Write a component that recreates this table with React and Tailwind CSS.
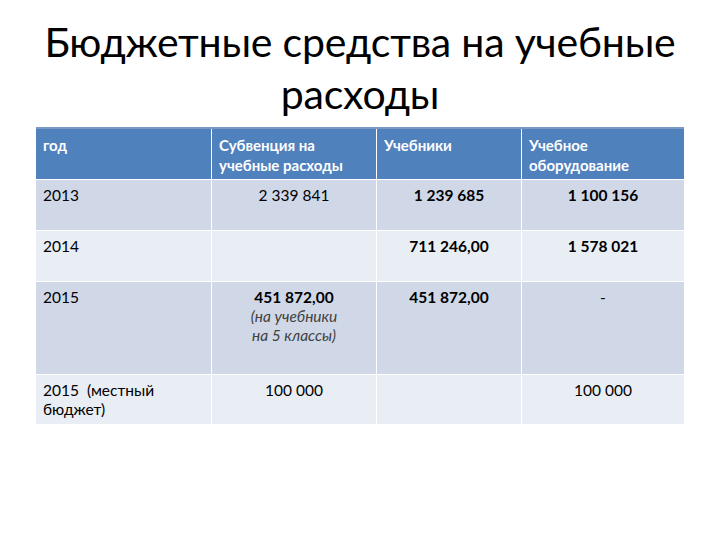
import React from "react";

const rows = [
  {
    bg: "bg-[#d0d8e8]",
    h: "h-[50px]",
    cells: [
      { text: "2013" },
      { text: "2 339 841", center: true },
      { text: "1 239 685", center: true, bold: true },
      { text: "1 100 156", center: true, bold: true },
    ],
  },
  {
    bg: "bg-[#e9edf4]",
    h: "h-[50px]",
    cells: [
      { text: "2014" },
      { text: "" },
      { text: "711 246,00", center: true, bold: true },
      { text: "1 578 021", center: true, bold: true },
    ],
  },
  {
    bg: "bg-[#d0d8e8]",
    h: "h-[92px]",
    cells: [
      { text: "2015" },
      { text: "451 872,00", center: true, bold: true, note: ["(на учебники", "на 5 классы)"] },
      { text: "451 872,00", center: true, bold: true },
      { text: "-", center: true },
    ],
  },
  {
    bg: "bg-[#e9edf4]",
    h: "h-[49px]",
    cells: [
      { lines: ["2015\u00a0\u00a0(местный", "бюджет)"] },
      { text: "100 000", center: true },
      { text: "" },
      { text: "100 000", center: true },
    ],
  },
];

const headers = [["год"], ["Субвенция на", "учебные расходы"], ["Учебники"], ["Учебное", "оборудование"]];

export default function App() {
  return (
    <div className="w-[720px] h-[540px] bg-white text-black" style={{ fontFamily: "Lato, 'Open Sans', sans-serif" }}>
      {/* Title */}
      <div className="pt-[16px] text-center text-[41px] leading-[52px] tracking-[-0.2px]">
        <div>Бюджетные средства на учебные</div>
        <div>расходы</div>
      </div>

      {/* Table */}
      <div className="ml-[36px] mt-[7px] w-[648px] border-t-2 border-[#7b97c4]">
        <div className="grid grid-cols-[175px_164px_144px_162px] gap-px bg-white">
          {headers.map((h, i) => (
            <div key={i} className="h-[50px] bg-[#4f81bd] px-[7px] pt-[6px] text-[15px] leading-[20px] font-bold text-white">
              {h.map((l, j) => (
                <div key={j}>{l}</div>
              ))}
            </div>
          ))}
          {rows.map((r, ri) =>
            r.cells.map((c, ci) => (
              <div
                key={ri + "-" + ci}
                className={`${r.bg} ${r.h} px-[7px] pt-[6px] text-[15.5px] leading-[19px] ${c.center ? "text-center" : ""} ${c.bold ? "font-bold" : ""}`}
              >
                {c.lines ? c.lines.map((l, j) => <div key={j}>{l}</div>) : c.text}
                {c.note && (
                  <div className="font-normal italic text-[#404040]">
                    {c.note.map((l, j) => (
                      <div key={j}>{l}</div>
                    ))}
                  </div>
                )}
              </div>
            ))
          )}
        </div>
      </div>
    </div>
  );
}
